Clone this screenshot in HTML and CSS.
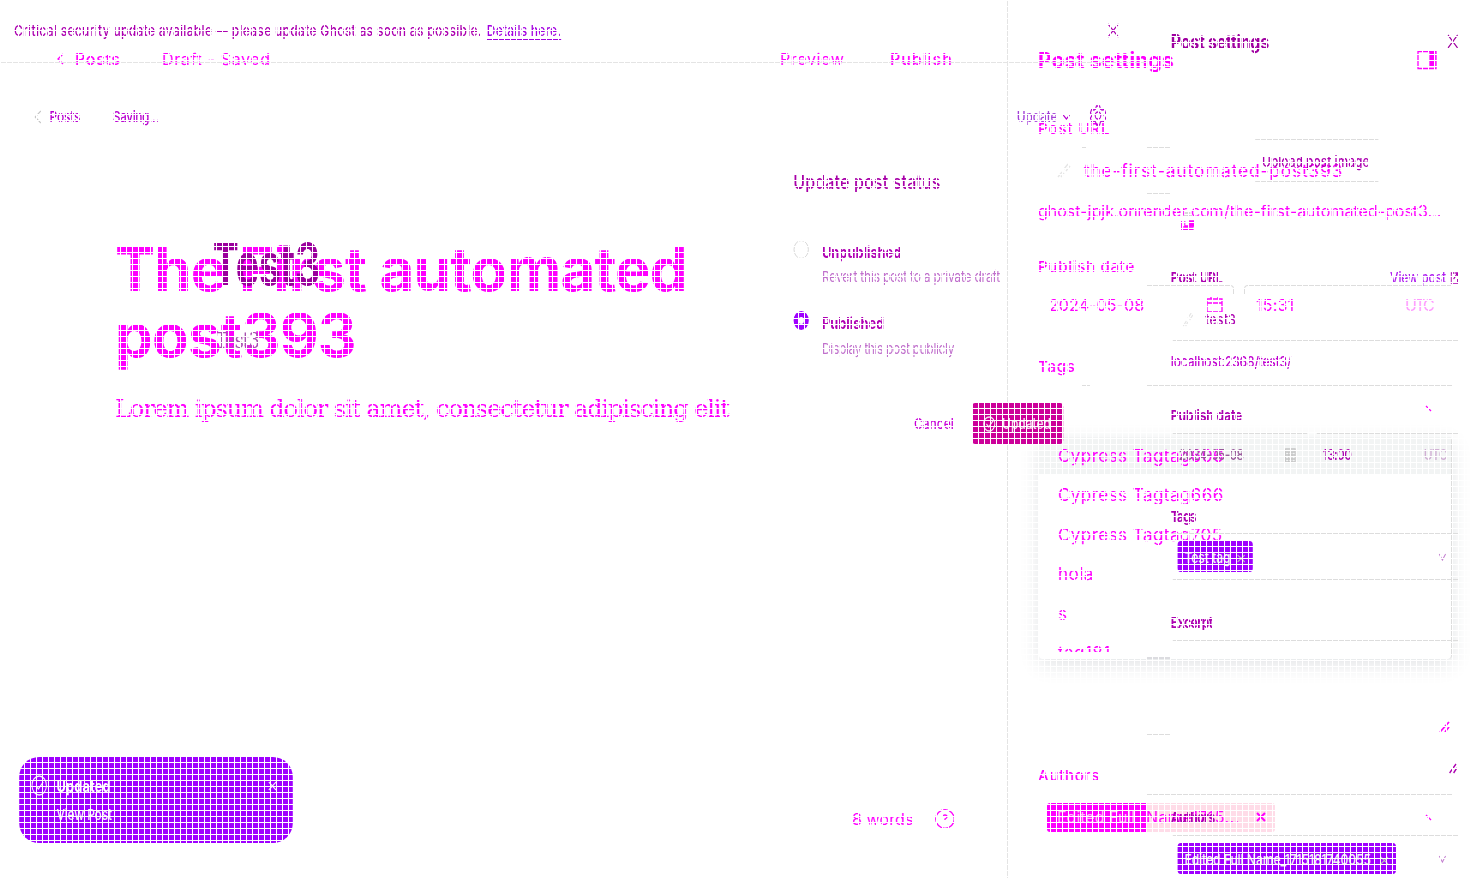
FILE: index.html
```
<!DOCTYPE html>
<html lang="en"><head><meta charset="utf-8"><title>Post editor</title><link rel="stylesheet" href="styles.css"></head>
<body>
<div class="screen editor">
 <main class="main">
  <header class="top"><svg class="back" width="8" height="12" viewBox="0 0 8 12"><path d="M7 1L2 6l5 5"/></svg><span class="posts">Posts</span><span class="saved">Draft - Saved</span><span class="preview">Preview</span><span class="publish">Publish</span></header>
  <h1>The First automated<br>post393</h1>
  <p class="lorem">Lorem ipsum dolor sit amet, consectetur adipiscing elit</p>
  <footer class="foot"><span class="words">8 words</span><svg width="20" height="20" viewBox="0 0 20 20"><circle cx="10" cy="10" r="9.300"/><path d="M8 8q0-2 2-2t2 2q0 1-2 2v1M10 13v1"/></svg></footer>
 </main>
 <aside class="side">
  <div class="row head"><span>Post settings</span><svg width="20" height="19" viewBox="0 0 20 19"><path d="M1 .5h18v17H1z"/><path class="solid" d="M13 .5h5v15h-5z"/></svg></div>
  <div class="row label u1">Post URL</div>
  <div class="box b1"><svg class="pale" width="15" height="16" viewBox="0 0 15 16"><path d="M2 14l4-5M5 14l3-4M8 6l4-5M10 8l4-5"/></svg><span class="slug">the-first-automated-post393</span></div>
  <div class="row hint">ghost-jpjk.onrender.com/the-first-automated-post3...</div>
  <div class="row label u2">Publish date</div>
  <div class="pair"><div class="box b2"><span class="date">2024-05-08</span><svg width="17" height="16" viewBox="0 0 17 16"><path d="M1 2h15v13H1zM1 6h15M5 0v2M12 0v2"/></svg></div><div class="box b3"><span class="time">15:31</span><span class="utc">UTC</span></div></div>
  <div class="row label u3">Tags</div>
  <div class="box b4"><svg class="chev" width="12" height="8" viewBox="0 0 12 8"><path d="M3 1l5 5"/></svg>
   <ul class="menu"><li>Cypress Tagtag606</li><li>Cypress Tagtag666</li><li>Cypress Tagtag705</li><li>hola</li><li>s</li><li>tag181</li></ul></div>
  <div class="box b5"><svg width="11" height="12" viewBox="0 0 11 12"><path d="M1 11L10 1M6 11l4-5"/></svg></div>
  <div class="row label u4">Authors</div>
  <div class="box b6"><div class="chip"><span class="ci">Edited Full</span><span class="cj">Name1715...</span><svg width="10" height="10" viewBox="0 0 10 10"><path d="M1 1l8 8M9 1L1 9"/></svg></div><svg class="chev" width="12" height="8" viewBox="0 0 12 8"><path d="M3 1l5 5"/></svg></div>
 </aside>
</div>
<div class="screen squeeze">
 <main class="main2">
  <div class="banner"><span class="crit">Critical security update available — please update Ghost as soon as possible.</span><span class="det">Details here.</span><svg width="15" height="15" viewBox="0 0 15 15"><path d="M1 1l13 13M14 1L1 14"/></svg></div>
  <nav class="nav2"><svg class="gray" width="9" height="14" viewBox="0 0 9 14"><path d="M8 1L1 7l7 6"/></svg><span class="posts2">Posts</span><span class="saving">Saving...</span><span class="upd">Update</span><svg class="uc" width="10" height="6" viewBox="0 0 10 6"><path d="M1 1l4 4 4-4"/></svg><svg class="gear" width="21" height="21" viewBox="0 0 21 21"><circle cx="10.500" cy="10.500" r="3.500"/><path d="M8.500 1h4l1 3 2 1 3-.5 1.500 3.500-2 2.500 2 2.500-1.500 3.500-3-.5-2 1-1 3h-4l-1-3-2-1-3 .5L1 13l2-2.500L1 8l1.500-3.500 3 .5 2-1z"/></svg></nav>
  <h2><span>Test3</span></h2>
  <p class="body3">Test3</p>
 </main>
 <aside class="side2">
  <div class="r s1"><span>Post settings</span><svg width="14" height="15" viewBox="0 0 14 15"><path d="M1 1l12 13M13 1L1 14"/></svg></div>
  <div class="upload"><span>Upload post image</span></div>
  <svg class="trash" width="17" height="18" viewBox="0 0 17 18"><path class="g" d="M5 1h7M3 4h11"/><path d="M1 9v9M3 15h13M1 17.500h15M5 9v5h4"/><path class="solid" d="M11 9h5v5h-5z"/></svg>
  <div class="r s2 bold"><span class="pu2">Post URL</span><span class="vp">View post</span><svg width="10" height="12" viewBox="0 0 10 12"><path d="M5 1H1v10h8V7M4 7l5-6M6 1h3v4"/></svg></div>
  <div class="f f1"><svg class="pale" width="15" height="17" viewBox="0 0 15 17"><path d="M2 15l4-5M5 15l3-4M8 7l4-5M10 9l4-5"/></svg><span class="te">test3</span></div>
  <div class="r s3">localhost:2368/test3/</div>
  <div class="r s4 bold">Publish date</div>
  <div class="pair2"><div class="f f2"><span class="d2">2024-05-08</span><svg class="gray" width="14" height="16" viewBox="0 0 14 16"><path d="M1 2h12v13H1zM1 5h12M1 8h12M1 12h12M5 5v10M9 5v10"/></svg></div><div class="f f3"><span class="hh">13:00</span><span class="utc2">UTC</span></div></div>
  <div class="r s5 bold">Tags</div>
  <div class="f f4"><div class="tag"><span>Test tag</span><svg width="11" height="9" viewBox="0 0 11 9"><path d="M1 1l9 7M10 1L1 8"/></svg></div><svg class="down" width="10" height="8" viewBox="0 0 10 8"><path d="M1 1l4 6 4-6"/></svg></div>
  <div class="r s6 bold">Excerpt</div>
  <div class="f f5"><svg width="11" height="11" viewBox="0 0 11 11"><path d="M1 10L9 1M6 10l4-5"/></svg></div>
  <div class="r s7 bold">Authors</div>
  <div class="f f6"><div class="tag"><span>Edited Full Name_1715181740055</span><svg width="11" height="9" viewBox="0 0 11 9"><path d="M1 1l9 7M10 1L1 8"/></svg></div><svg class="down" width="10" height="8" viewBox="0 0 10 8"><path d="M1 1l4 6 4-6"/></svg></div>
 </aside>
 <section class="pop">
  <h3>Update post status</h3>
  <div class="opt o1"><i class="radio"></i><div><b>Unpublished</b><small class="rv">Revert this post to a private draft</small></div></div>
  <div class="opt o2"><i class="radio on"></i><div><b>Published</b><small class="dp">Display this post publicly</small></div></div>
  <div class="acts"><span class="ca">Cancel</span><div class="btn"><svg width="17" height="16" viewBox="0 0 17 16"><circle cx="8.500" cy="8" r="7"/><path d="M5 8l3 3 6-7"/></svg><span>Updated</span></div></div>
 </section>
 <section class="toast"><svg width="20" height="21" viewBox="0 0 20 21"><ellipse cx="10" cy="10.500" rx="9" ry="9.500"/><path d="M6 11l3 3 6-7"/></svg><div><b>Updated</b><span class="vw">View Post</span></div><svg class="tx" width="11" height="10" viewBox="0 0 11 10"><path d="M1 1l9 8M10 1L1 9"/></svg></section>
</div>
<div class="mesh"></div>
</body></html>
```
FILE: styles.css
```
*{box-sizing:border-box}
body{margin:0;position:relative;width:1483px;height:878px;overflow:hidden;background:#fff;font-family:Inter,"Liberation Sans",sans-serif;font-size:16px;line-height:20px;color:#f0f}
svg{display:block;flex:none;fill:none;stroke:currentColor;stroke-width:1.3}
.solid{fill:currentColor}
h1,h2,h3,p,ul{margin:0;padding:0;list-style:none}
span,.row,.r,p,h3,b,small{white-space:nowrap}
.mesh{position:absolute;inset:0;background:repeating-linear-gradient(90deg,#fff 0 1px,transparent 1px 6px),repeating-linear-gradient(#fff 0 1px,transparent 1px 6px)}
.screen{position:absolute;top:0;left:0;height:878px;overflow:hidden}

.editor{display:flex;width:1483px}
.main{width:1008px;border-right:1px solid #e4e4e4;display:flex;flex-direction:column}
.top{display:flex;align-items:center;height:20px;margin-top:49px;padding-left:56px;letter-spacing:.65px}
.top span{flex:none}
.posts{width:87px;margin-left:11px;font-weight:500}
.saved{width:618px}
.preview{width:110px}
.publish{font-weight:500;letter-spacing:.95px}
h1{margin:167px 0 0 115px;font-size:60px;line-height:66px;font-weight:700;letter-spacing:-.85px}
.lorem{margin:31px 0 0 115px;font:24px/20px "DejaVu Serif",serif;letter-spacing:-1.11px}
.foot{display:flex;align-items:center;margin:auto 0 49px 852px;height:20px}
.words{width:83px;letter-spacing:.1px}
.side{width:414px;margin-left:30px}
.row{display:flex;align-items:center;height:20px}
.head{margin-top:50px;justify-content:space-between;padding-right:15px;font-size:21px;font-weight:700;letter-spacing:.2px}
.head span{padding-top:1px}
.label{font-size:15px;font-weight:500;letter-spacing:.75px}
.u1{margin-top:49px;letter-spacing:.9px}
.box{position:relative;display:flex;align-items:center;background:linear-gradient(#ddd,#ddd) 109px 0/24px 1px no-repeat,linear-gradient(#ddd,#ddd) 109px 100%/24px 1px no-repeat,linear-gradient(#ddd,#ddd) 44px 0/5px 1px no-repeat}
.b1{height:47px;margin-top:8px;padding-left:18px;font-size:17.500px}
.pale{color:#e5e5e5}
.b1 span{margin-left:13px;letter-spacing:.75px}
.hint{margin-top:7px}
.u2{margin-top:36px}
.pair{display:flex;gap:10px;margin-top:8px}
.b2,.b3{height:40px}
.b2{width:196px;padding-left:11px;background:linear-gradient(#ddd,#ddd) 109px 0/84px 1px no-repeat}
.b2::after,.b3::before{content:"";position:absolute;top:0;width:7px;height:8px;border-top:1px solid #ddd}
.b2::after{right:0;border-right:1px solid #ddd;border-radius:0 4px 0 0}
.b3::before{left:0;border-left:1px solid #ddd;border-radius:4px 0 0}
.date{width:157px;letter-spacing:.1px}
.time{letter-spacing:.2px}
.b3{width:208px;padding:0 19px 0 12px;justify-content:space-between;background:linear-gradient(#ddd,#ddd) 5px 0/202px 1px no-repeat}
.utc{opacity:.4;letter-spacing:-1.8px}
.u3{margin-top:32px}
.b4{height:54px;margin-top:8px;background:linear-gradient(#ddd,#ddd) 109px 0/305px 1px no-repeat,linear-gradient(#ddd,#ddd) 44px 0/8px 1px no-repeat}
.chev{margin-left:auto;margin-right:17px}
.b4 .chev{margin-top:-7px}
.menu{position:absolute;left:1px;top:52px;width:413px;height:222px;border-right:1px solid #ddd;background:#fff;box-shadow:0 6px 20px rgba(30,50,60,.13);border-radius:4px;font-size:17px;letter-spacing:.45px}
.menu li{height:39.600px;line-height:41px;padding-left:19px}
.menu li:first-child{height:38px;line-height:39px;background:#f2f4f4}
.menu li:last-child{height:19px;line-height:41px;overflow:hidden}
.b5{height:78px;margin-top:218px;background:linear-gradient(#dcdce0,#dcdce0) 109px 0/24px 2px no-repeat,linear-gradient(#ddd,#ddd) 109px 100%/24px 1px no-repeat}
.b5 svg{margin:62px 2px 0 auto;stroke-width:1.800}
.u4{margin-top:31px}
.b6{height:48px;margin-top:8px;padding-left:9px;background:linear-gradient(#ddd,#ddd) 109px 0/305px 1px no-repeat}
.chip{display:flex;align-items:center;width:228px;height:29px;margin-top:-2px;background:linear-gradient(90deg,#f0f 99px,#ffdce8 99px);border-radius:3px}
.ci{width:99px;padding-left:10px;color:#ffb8f8}
.cj{width:110px;letter-spacing:.4px}
.chip svg{stroke-width:2}

.squeeze{width:1854px;transform:scaleX(.8);transform-origin:0 0;display:flex;font-size:15px;font-weight:500;color:#ac00b0}
.main2{width:1463.500px}
.banner{position:relative;display:flex;align-items:center;height:63px;padding-left:17.500px;border-bottom:1px solid #e4e4e4;width:1433px}
.crit{width:591px;letter-spacing:.4px}
.det{color:#a300e0;letter-spacing:.25px;text-decoration:underline;text-underline-offset:3px}
.banner svg{position:absolute;left:1384px;top:23px}
.nav2{display:flex;align-items:center;height:20px;margin-top:44px;padding-left:43px;color:#b800d0}
.gray{color:#c4c4c4}
.posts2{width:79px;margin-left:10px;letter-spacing:-.3px}
.saving{width:1130px;letter-spacing:-.6px}
.upd{width:57px;color:#a440d8;letter-spacing:-.2px}
.uc{margin-right:24px}
.gear{margin-top:-3px}
h2{margin:104px 0 0 266px;font-size:58px;line-height:66px;color:#9a009c}
h2 span{display:inline-block;transform:scaleX(.84);transform-origin:0 0}
.body3{margin:34px 0 0 270px;font:22px/20px "DejaVu Serif",serif;letter-spacing:-1.300px;color:#a850b0}
.side2{width:359px;display:flex;flex-direction:column}
.side2>*{flex:none}
.r{display:flex;align-items:center;height:20px;padding-top:1px}
.bold{font-weight:700;letter-spacing:-.1px}
.s1{margin-top:31px;justify-content:space-between;font-size:20px;font-weight:700;letter-spacing:-.35px;color:#9f00a0}
.upload{display:flex;align-items:center;margin:88px 0 0 105px;padding:3px 0 0 9px;width:154px;height:43px;border:solid #ddd;border-width:1px 0}
.trash{margin:30px 0 0 12px;color:#f0f}
.g{stroke:#ccc}
.s2{margin-top:37px}
.vp{margin-left:auto;width:75px;font-weight:500;color:#b020f0}
.f{position:relative;display:flex;align-items:center;background:linear-gradient(#ddd,#ddd) 2px 0/100% 1px no-repeat}
.f1{height:43px;margin-top:11px;padding-left:13px;background-position:2px 100%}
.f1 span{margin-left:15px;letter-spacing:.5px}
.s3{margin-top:10px;color:#c000d0;letter-spacing:-.2px}
.s4{margin-top:34px}
.pair2{display:flex;gap:10px;margin-top:8px}
.f2,.f3{height:42px;padding:2px 0 0 10px}
.f2{width:170px}
.d2{width:132px;letter-spacing:-.9px;color:#98589a}
.f3{width:179px;justify-content:space-between;padding-right:14px}
.hh{letter-spacing:-.8px}
.utc2{color:#d0b0d4;letter-spacing:-.9px}
.s5{margin-top:31px;letter-spacing:-1.100px}
.f4,.f6{height:47px;margin-top:7px;padding:0 15px 0 8px;justify-content:space-between;background:linear-gradient(#ddd,#ddd) 2px 0/100% 1px no-repeat,linear-gradient(#ddd,#ddd) 2px 100%/100% 1px no-repeat}
.tag{display:flex;align-items:center;justify-content:space-between;height:31px;padding:3px 9px 0;background:#9f00ff;color:#f4f4f4;border-radius:4px}
.tag svg{color:#bbb}
.down{color:#c480d0}
.f4 .tag{width:94px}
.f6 .tag{width:273px}
.s6{margin-top:32px;letter-spacing:-.56px}
.f5{height:134px;margin-top:8px}
.f5 svg{margin:122px 1px 0 auto;stroke-width:1.800}
.s7{margin-top:33px;letter-spacing:-.6px}
.f6{margin-top:8px}

.pop{position:absolute;left:991.500px;top:171px;width:337px}
h3{font-size:20px;line-height:22px;font-weight:500;letter-spacing:.2px;color:#a800a8}
.opt{display:flex;height:62px}
.o1{margin-top:47px}.o2{margin-top:9px}
.radio{width:19px;height:19px;margin-right:17px;border:1px solid #d4d4d4;border-radius:50%}
.on{border:6px solid #9f00ff}
b,small{display:block;line-height:22px;font-size:16px}
b{padding-top:1px;font-weight:700;color:#b000b4}
small{font-size:15px;line-height:27px;font-weight:400;color:#c070cc}
.rv{letter-spacing:-.26px}.dp{padding-top:1px;letter-spacing:-.42px}
.acts{display:flex;align-items:center;margin:30px 0 0 151px;color:#c800d8}
.ca{width:72px;padding-top:1px}
.btn{display:flex;align-items:center;gap:8px;width:114px;height:41px;padding-left:13px;background:#cc0099;color:#f4e4f0;border-radius:4px}
.toast{position:absolute;left:23.500px;top:757px;width:342px;height:86px;display:flex;padding:18px 20px 0 15px;background:#9f00ff;color:#f4eefa;border-radius:25px/20px}
.toast div{margin-left:12px}
.toast b{padding:0;line-height:23px;letter-spacing:.2px;color:#fff}
.vw{display:inline-block;line-height:20px;margin-top:7px;letter-spacing:-.2px;text-decoration:underline;text-underline-offset:2px}
.tx{margin:6px 0 0 auto}
```
